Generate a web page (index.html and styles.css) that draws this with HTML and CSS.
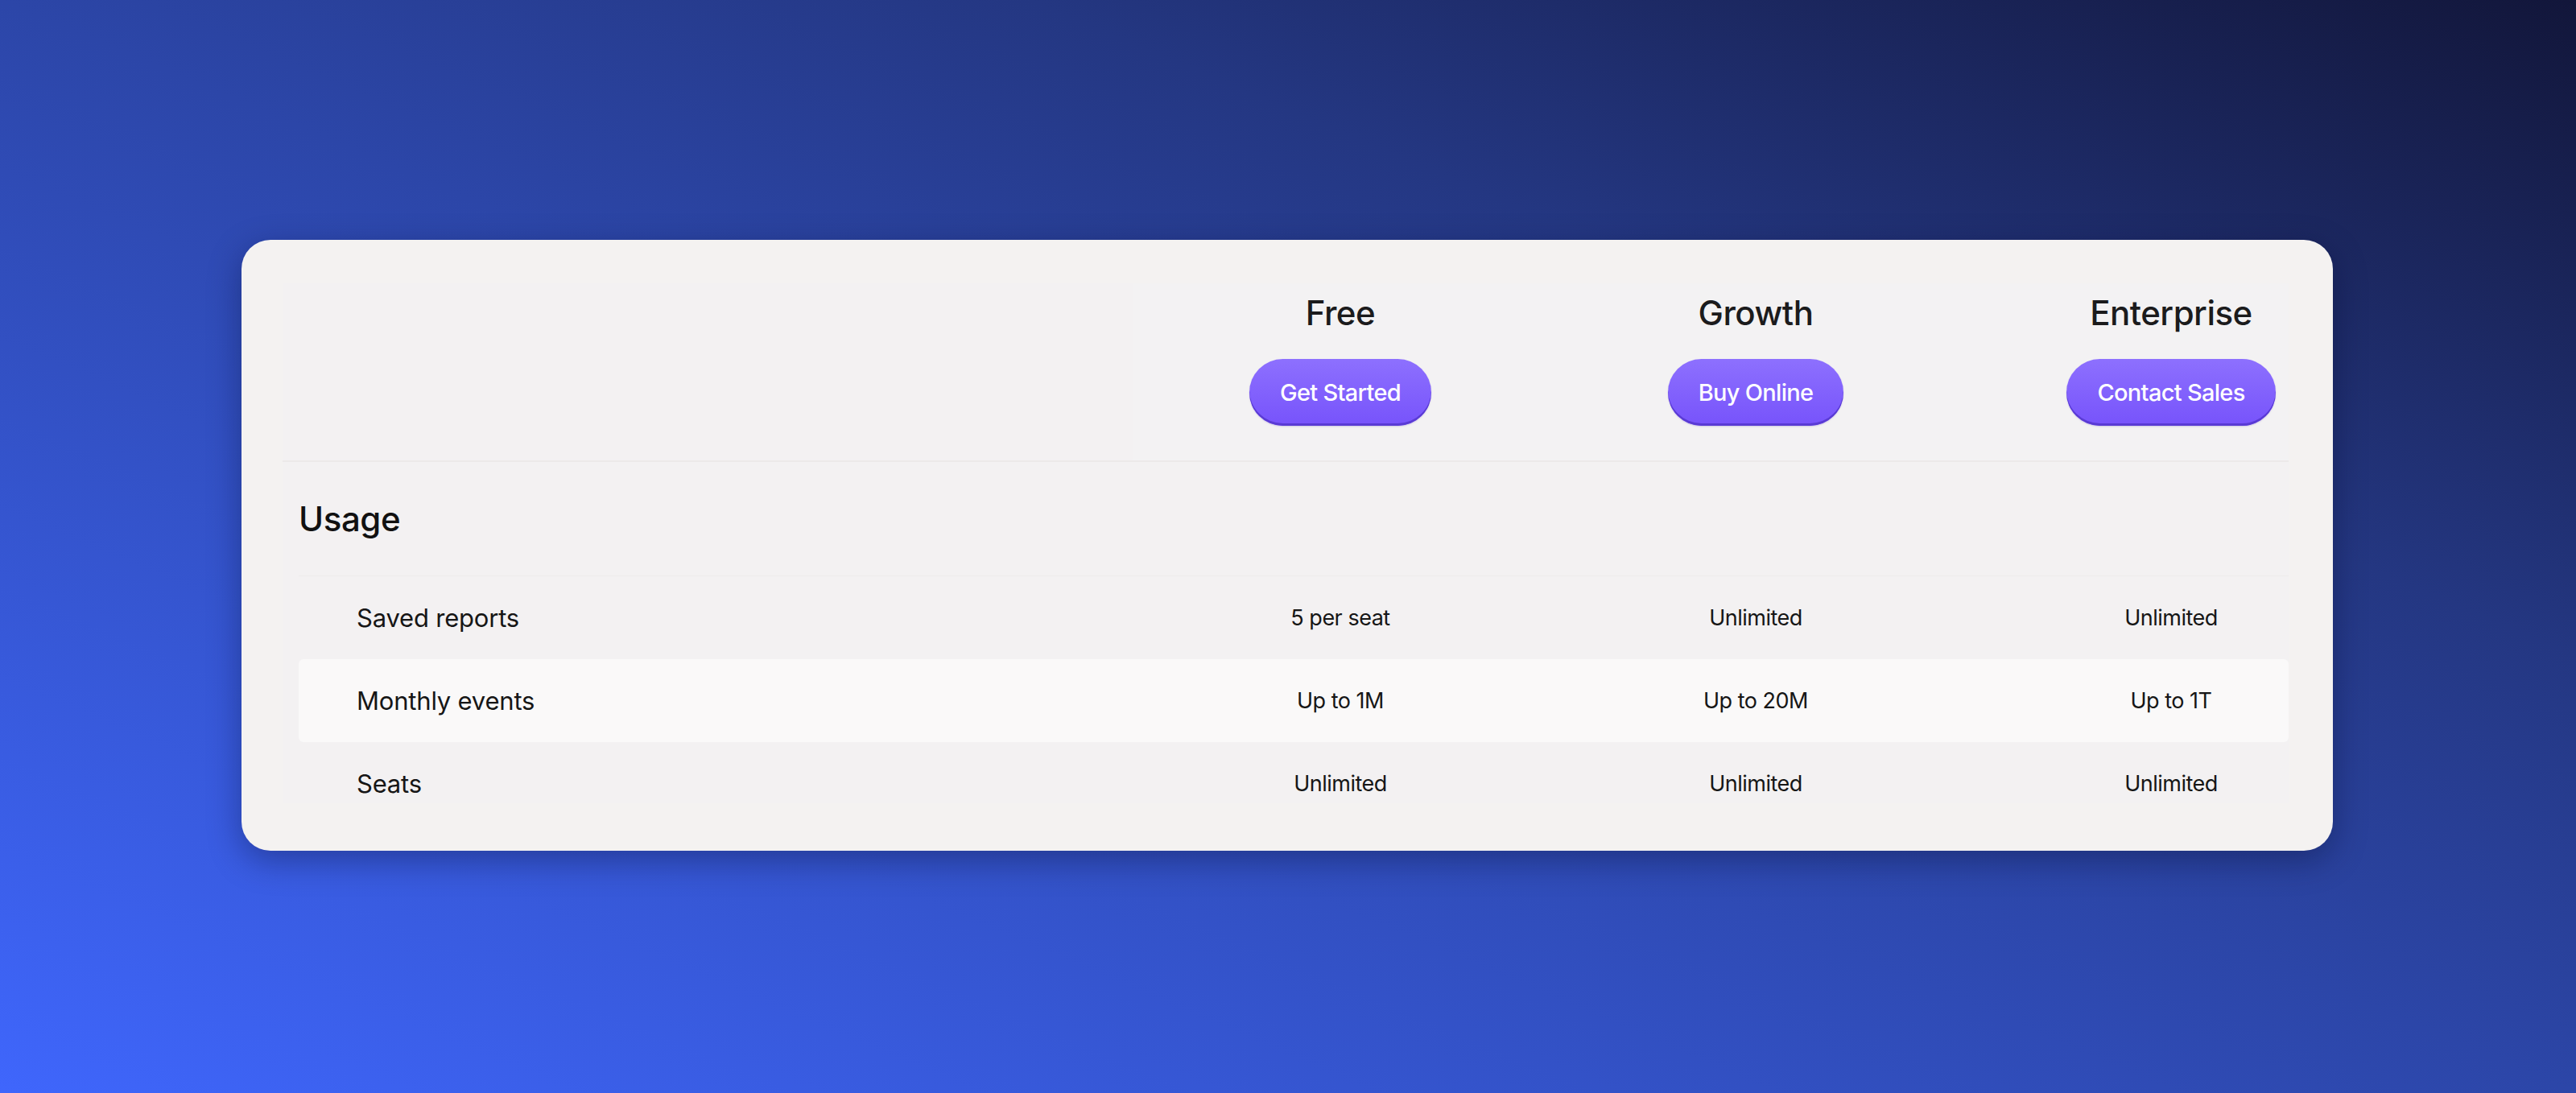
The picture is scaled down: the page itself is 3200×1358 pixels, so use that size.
FILE: index.html
```html
<!DOCTYPE html>
<html lang="en">
<head>
  <meta charset="UTF-8" />
  <meta name="viewport" content="width=device-width, initial-scale=1.0"/>
  <title>Pricing Comparison</title>
  <link rel="stylesheet" href="styles.css">
</head>
<body>

<div class="card">
  <div class="table-wrap">
    <div class="plan-head">
      <div class="head-cell head-empty"></div>
      <div class="head-cell">
        <h3>Free</h3>
        <a class="btn" href="#">Get Started</a>
      </div>
      <div class="head-cell">
        <h3>Growth</h3>
        <a class="btn" href="#">Buy Online</a>
      </div>
      <div class="head-cell">
        <h3>Enterprise</h3>
        <a class="btn" href="#">Contact Sales</a>
      </div>
    </div>

    <div class="section-title">Usage</div>

    <div class="rows">
      <div class="row">
        <div class="label">Saved reports</div>
        <div class="value">5 per seat</div>
        <div class="value">Unlimited</div>
        <div class="value">Unlimited</div>
      </div>
      <div class="row row-alt">
        <div class="label">Monthly events</div>
        <div class="value">Up to 1M</div>
        <div class="value">Up to 20M</div>
        <div class="value">Up to 1T</div>
      </div>
      <div class="row">
        <div class="label">Seats</div>
        <div class="value">Unlimited</div>
        <div class="value">Unlimited</div>
        <div class="value">Unlimited</div>
      </div>
    </div>
  </div>
</div>

</body>
</html>
```

FILE: styles.css
```css
html, body {
  height: 100%;
}
body {
  font-family: Inter, "Noto Sans", Arial, sans-serif;
  margin: 0;
  padding: 298px 302px 0 300px;
  box-sizing: border-box;
  background: linear-gradient(to top right, #3f66fc 0%, #2c46a8 50%, #243782 70%, #12163a 100%);
  color: #151515;
}
.card {
  background: #f4f2f1;
  border-radius: 36px;
  padding: 54px 55px 59px 51px;
  box-shadow: 0 12px 40px rgba(5, 10, 40, 0.35);
}
.table-wrap {
  height: 646px;
  overflow: hidden;
  background: #f3f1f2;
}
.plan-head {
  display: grid;
  grid-template-columns: 1056px repeat(3, 516px);
  height: 220px;
  border-bottom: 2px solid #ece9e9;
}
.head-cell {
  display: flex;
  flex-direction: column;
  align-items: center;
  padding-top: 12px;
  background: #f3f2f3;
}
.head-empty {
  background: #f3f1f2;
}
.head-cell h3 {
  margin: 0 0 32px;
  font-size: 42px;
  line-height: 50px;
  font-weight: 500;
  letter-spacing: -0.5px;
  color: #1b1b1c;
}
.btn {
  display: flex;
  align-items: center;
  height: 83px;
  box-sizing: border-box;
  padding: 0 38px;
  border-radius: 42px;
  background: linear-gradient(#8d70fe, #7753fb);
  box-shadow: inset 0 -3px 0 #5a3bd4, 0 1px 2px rgba(60, 30, 160, 0.2);
  color: #fff;
  text-decoration: none;
  font-size: 29px;
  font-weight: 500;
  letter-spacing: -0.7px;
}
.section-title {
  height: 141px;
  display: flex;
  align-items: center;
  padding-left: 20px;
  font-size: 42px;
  font-weight: 500;
  letter-spacing: -0.4px;
  color: #111;
}
.rows {
  margin-left: 20px;
  border-top: 1px solid #eeebeb;
}
.row {
  display: grid;
  grid-template-columns: 1036px repeat(3, 516px);
  height: 103px;
  align-items: center;
}
.row-alt {
  background: #faf9f9;
  border-radius: 6px;
}
.label {
  padding-left: 72px;
  font-size: 31px;
  letter-spacing: -0.2px;
  color: #161616;
}
.value {
  text-align: center;
  font-size: 27px;
  letter-spacing: -0.5px;
  color: #161616;
}
```
